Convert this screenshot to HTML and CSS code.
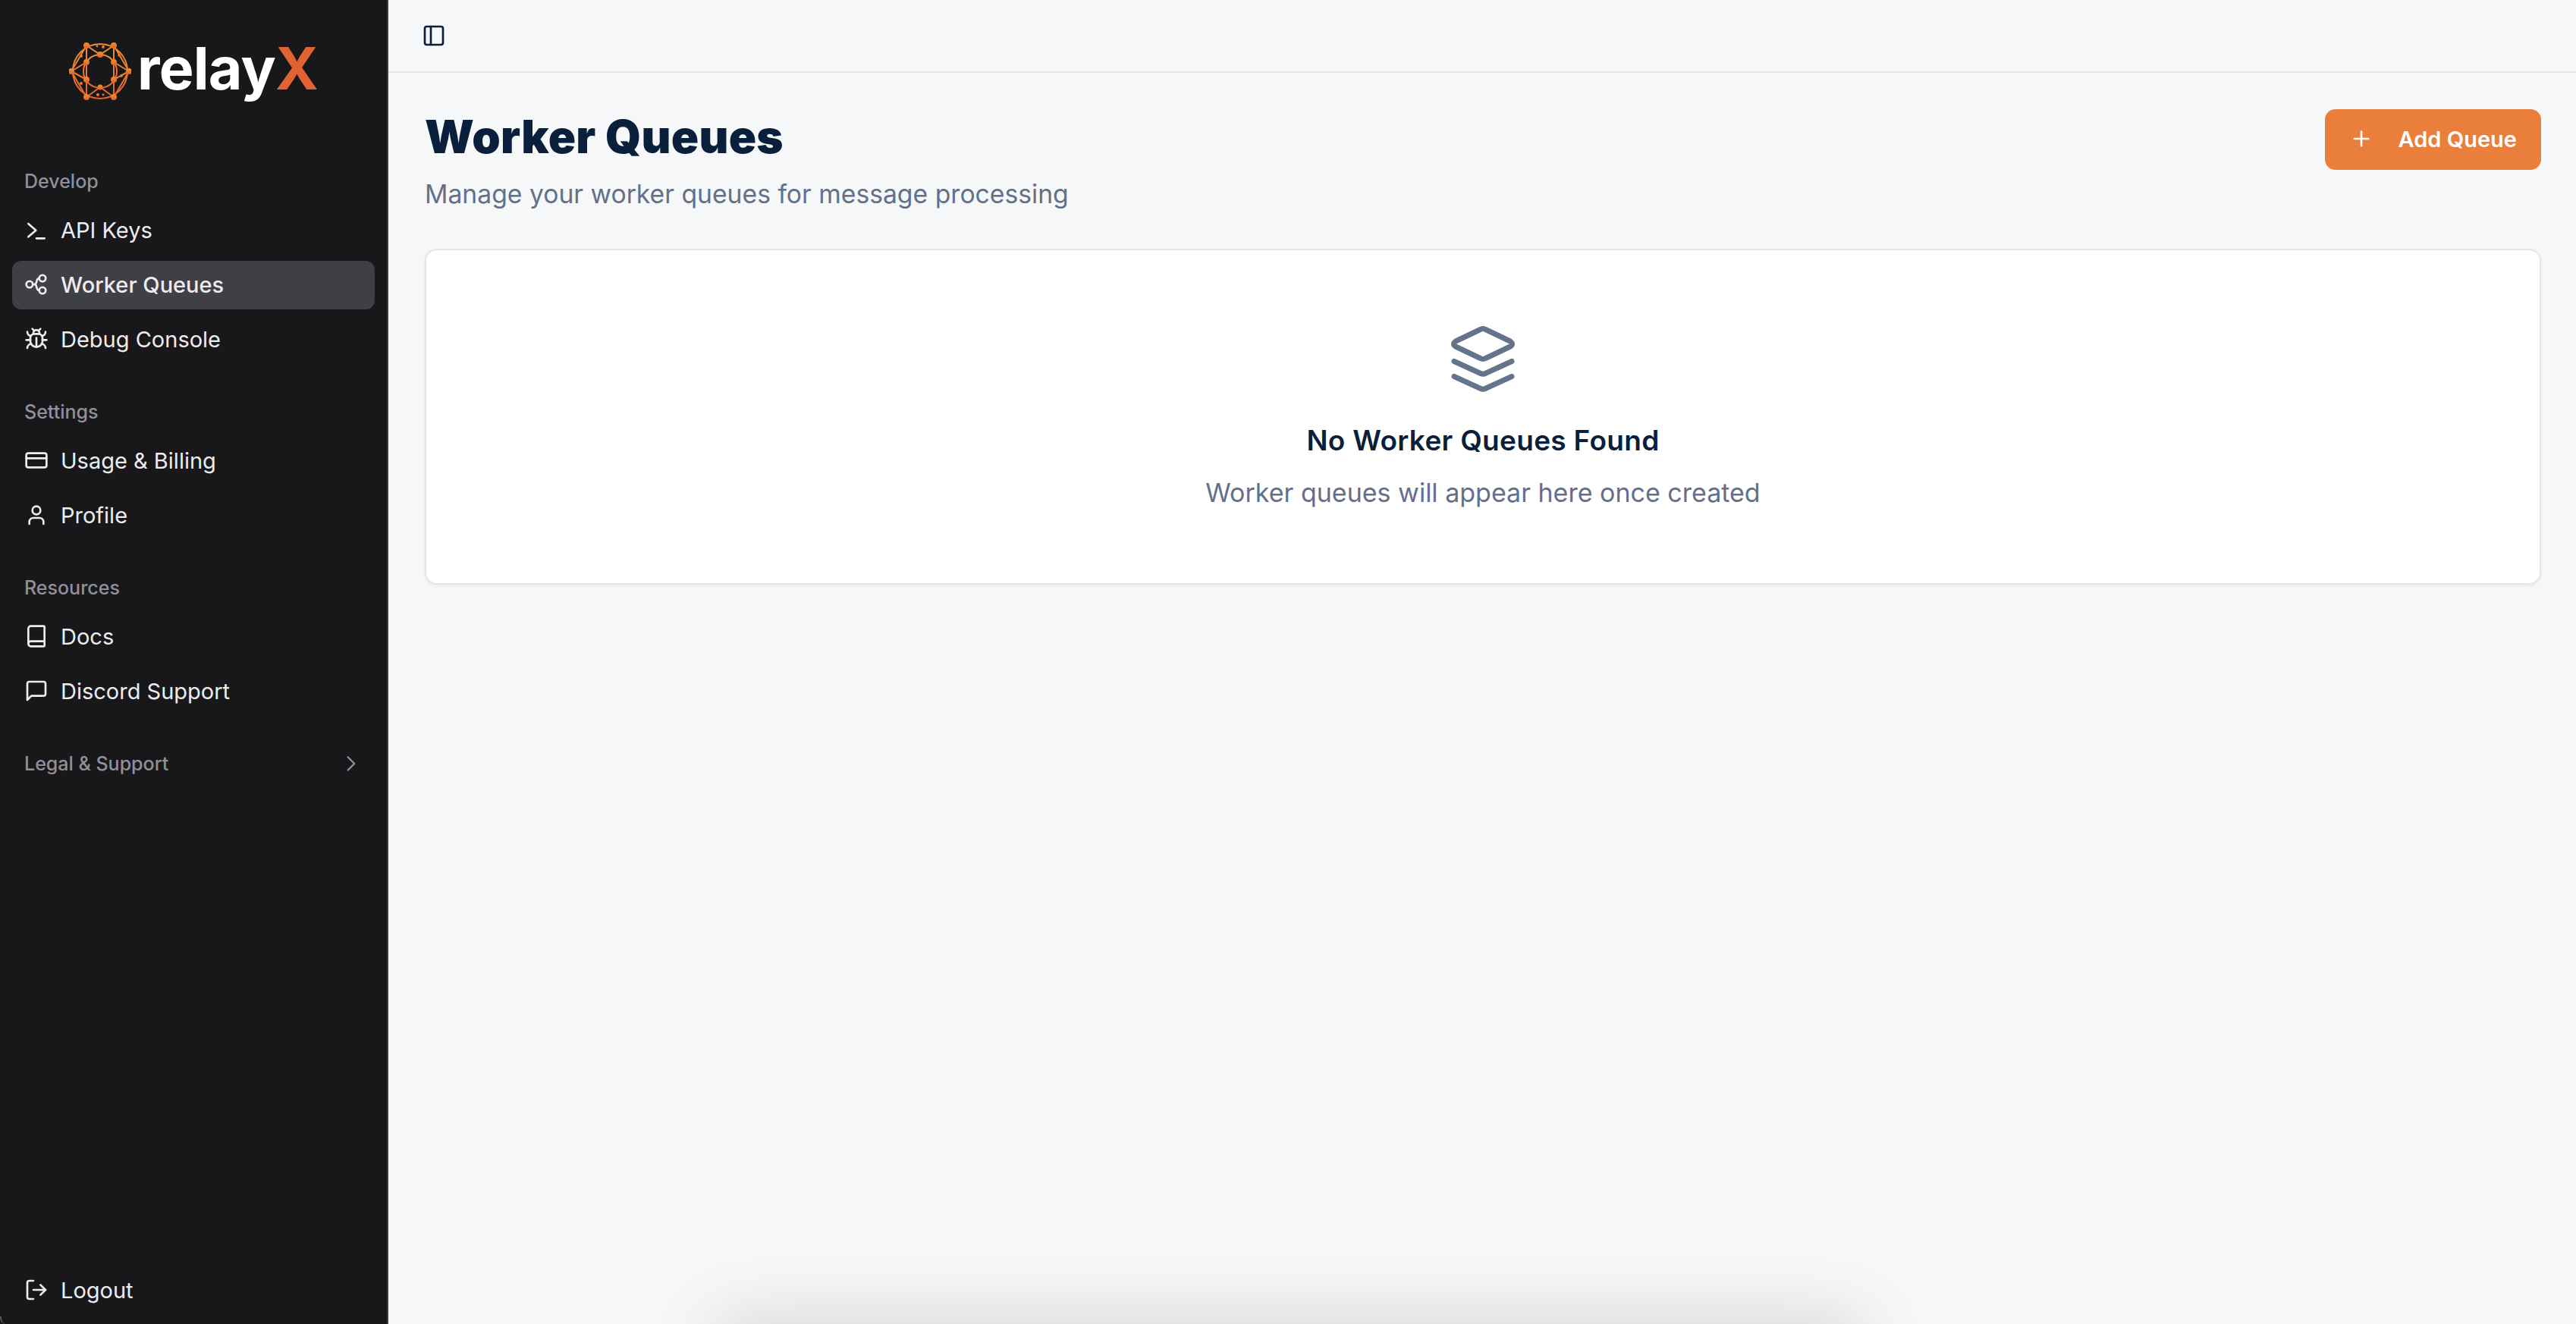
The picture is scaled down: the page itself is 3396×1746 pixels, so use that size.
FILE: index.html
```html
<!DOCTYPE html>
<html lang="en">
<head>
  <meta charset="UTF-8">
  <title>Worker Queues</title>
  <link rel="stylesheet" href="styles.css">
</head>
<body>
  <div class="app">
    <aside class="sidebar">
      <div class="logo">
        <svg class="logo-mark" viewBox="0 0 80 80" fill="none">
          <defs>
            <linearGradient id="ringGrad" x1="0" y1="0" x2="0" y2="1">
              <stop offset="0" stop-color="#ee9030"/>
              <stop offset="1" stop-color="#e2622f"/>
            </linearGradient>
          </defs>
          <g stroke="url(#ringGrad)" stroke-width="2" fill="none">
            <circle cx="40" cy="40" r="36"/>
            <circle cx="40" cy="40" r="22"/>
            <path d="M22 6 L22 74 M58 6 L58 74 M2 40 L22 6 M2 40 L22 74 M78 40 L58 6 M78 40 L58 74"/>
            <path d="M22 6 L40 18 L58 6 M22 74 L40 61 L58 74 M2 40 L22 28 M2 40 L22 51 M78 40 L58 28 M78 40 L58 51"/>
          </g>
          <g fill="url(#ringGrad)">
            <circle cx="22" cy="6" r="4"/><circle cx="58" cy="6" r="4"/>
            <circle cx="2" cy="40" r="4"/><circle cx="78" cy="40" r="4"/>
            <circle cx="22" cy="74" r="4"/><circle cx="58" cy="74" r="4"/>
            <circle cx="40" cy="18" r="4"/><circle cx="40" cy="61" r="3.5"/>
            <circle cx="22" cy="28" r="4"/><circle cx="58" cy="28" r="4"/>
            <circle cx="22" cy="51" r="4"/><circle cx="58" cy="51" r="4"/>
            <circle cx="36" cy="7" r="1.4"/><circle cx="44" cy="8" r="2"/>
            <circle cx="15" cy="20" r="2"/><circle cx="65" cy="19" r="1.8"/>
            <circle cx="15" cy="56" r="2"/><circle cx="68" cy="46" r="2"/>
            <circle cx="37" cy="71" r="2"/><circle cx="44" cy="71" r="1.4"/>
          </g>
        </svg>
        <span class="logo-text">relay<span class="logo-x">X</span></span>
      </div>

      <nav class="nav">
        <div class="nav-group">
          <div class="nav-label">Develop</div>
          <a class="nav-item">
            <svg class="icon" viewBox="0 0 24 24"><polyline points="4 19 11.5 12.5 4 6"/><line x1="12" y1="20.5" x2="20" y2="20.5"/></svg>
            API Keys
          </a>
          <a class="nav-item active">
            <svg class="icon" viewBox="0 0 24 24"><circle cx="5.2" cy="12" r="3.2"/><circle cx="18" cy="6" r="3.2"/><circle cx="18" cy="18" r="3.2"/><path d="M8.4 12H10c1.800 0 1.800-1.500 2.200-3 .4-1.800 1.300-3 2.600-3"/><path d="M10 12c1.800 0 1.800 1.500 2.200 3 .4 1.800 1.300 3 2.600 3"/></svg>
            Worker Queues
          </a>
          <a class="nav-item">
            <svg class="icon" viewBox="0 0 24 24"><path d="m8 2 1.880 1.880"/><path d="M14.120 3.880 16 2"/><path d="M9 7.130v-1a3 3 0 1 1 6 0v1"/><path d="M12 20c-3.300 0-6-2.700-6-6v-3a4 4 0 0 1 4-4h4a4 4 0 0 1 4 4v3c0 3.300-2.700 6-6 6"/><path d="M12 20v-9"/><path d="M6.530 9C4.600 8.800 3 7.100 3 5"/><path d="M6 13H2"/><path d="M3 21c0-2.100 1.700-3.900 3.800-4"/><path d="M20.970 5c0 2.100-1.600 3.800-3.500 4"/><path d="M22 13h-4"/><path d="M17.200 17c2.100.1 3.800 1.900 3.800 4"/></svg>
            Debug Console
          </a>
        </div>
        <div class="nav-group">
          <div class="nav-label">Settings</div>
          <a class="nav-item">
            <svg class="icon" viewBox="0 0 24 24"><rect x="2" y="5" width="20" height="14" rx="2"/><line x1="2" y1="10" x2="22" y2="10"/></svg>
            Usage &amp; Billing
          </a>
          <a class="nav-item">
            <svg class="icon" viewBox="0 0 24 24"><path d="M19 21v-2a4 4 0 0 0-4-4H9a4 4 0 0 0-4 4v2"/><circle cx="12" cy="7.500" r="4"/></svg>
            Profile
          </a>
        </div>
        <div class="nav-group">
          <div class="nav-label">Resources</div>
          <a class="nav-item">
            <svg class="icon" viewBox="0 0 24 24"><path d="M4 19.500v-15A2.500 2.500 0 0 1 6.500 2H19a1 1 0 0 1 1 1v18a1 1 0 0 1-1 1H6.500a1 1 0 0 1 0-5H20"/></svg>
            Docs
          </a>
          <a class="nav-item">
            <svg class="icon" viewBox="0 0 24 24"><path d="M21 15a2 2 0 0 1-2 2H7l-4 4V5a2 2 0 0 1 2-2h14a2 2 0 0 1 2 2z"/></svg>
            Discord Support
          </a>
        </div>
        <div class="nav-label nav-collapse">
          Legal &amp; Support
          <svg class="icon chevron" viewBox="0 0 24 24"><path d="m9 18 6-6-6-6"/></svg>
        </div>
      </nav>

      <a class="nav-item logout">
        <svg class="icon" viewBox="0 0 24 24"><path d="M9 21H5a2 2 0 0 1-2-2V5a2 2 0 0 1 2-2h4"/><polyline points="16 17 21 12 16 7"/><line x1="21" y1="12" x2="9" y2="12"/></svg>
        Logout
      </a>
    </aside>

    <main class="main">
      <header class="topbar">
        <svg class="icon panel-icon" viewBox="0 0 24 24"><rect x="3" y="3" width="18" height="18" rx="2"/><path d="M9 3v18"/></svg>
      </header>

      <div class="content">
        <div class="page-head">
          <div>
            <h1 class="page-title">Worker Queues</h1>
            <p class="page-sub">Manage your worker queues for message processing</p>
          </div>
          <button class="add-btn">
            <svg class="icon" viewBox="0 0 24 24"><path d="M5 12h14"/><path d="M12 5v14"/></svg>
            Add Queue
          </button>
        </div>

        <section class="card">
          <svg class="empty-icon" viewBox="0 0 88 88" fill="none">
            <path d="M40.500 4.500Q44 2.500 47.500 4.500L80 20Q85 23.500 80 27L47.500 42.500Q44 44.500 40.500 42.500L8 27Q3 23.500 8 20Z"/>
            <path d="M6 46.500L41 62.500Q44 64 47 62.500L82 46.500"/>
            <path d="M6 66.500L41 82.500Q44 84 47 82.500L82 66.500"/>
          </svg>
          <h2 class="empty-title">No Worker Queues Found</h2>
          <p class="empty-sub">Worker queues will appear here once created</p>
        </section>
      </div>
    </main>

    <div class="dock-shadow"></div>
    <div class="window-corner"></div>
  </div>
</body>
</html>
```

FILE: styles.css
```css
* {
  box-sizing: border-box;
}

html, body {
  height: 100%;
}

body {
  margin: 0;
  overflow: hidden;
  font-family: "Inter", "Liberation Sans", sans-serif;
  background: #f6f7f9;
}

.app {
  position: relative;
  display: flex;
  height: 100%;
  overflow: hidden;
}

/* sidebar */
.sidebar {
  width: 512px;
  flex-shrink: 0;
  display: flex;
  flex-direction: column;
  padding: 0 16px 12px;
  background: #18181b;
  border-right: 2px solid #3f3f46;
}

.logo {
  display: flex;
  align-items: center;
  justify-content: center;
  gap: 8px;
  height: 188px;
}

.logo-mark {
  width: 82px;
  height: 80px;
}

.logo-text {
  font-size: 77px;
  font-weight: 700;
  line-height: 1;
  letter-spacing: -0.8px;
  color: #fff;
  margin-bottom: 8px;
}

.logo-x {
  color: #e16232;
}

.nav {
  flex: 1;
  display: flex;
  flex-direction: column;
  gap: 40px;
  padding-top: 28px;
}

.nav-group {
  display: flex;
  flex-direction: column;
  gap: 8px;
}

.nav-label {
  display: flex;
  align-items: center;
  height: 48px;
  padding: 0 0 2px 16px;
  font-size: 25px;
  font-weight: 500;
  color: #90909c;
}

.nav-item {
  display: flex;
  align-items: center;
  gap: 16px;
  height: 64px;
  padding: 0 16px 2px;
  border-radius: 12px;
  font-size: 29px;
  color: #ececee;
}

.nav-item.active {
  background: #3f3f46;
  font-weight: 500;
}

.nav-collapse {
  justify-content: space-between;
  padding-right: 14px;
}

.icon {
  width: 32px;
  height: 32px;
  flex-shrink: 0;
  fill: none;
  stroke: currentColor;
  stroke-width: 2;
  stroke-linecap: round;
  stroke-linejoin: round;
}

.chevron {
  width: 34px;
  height: 34px;
  stroke-width: 1.700;
}

/* main area */
.main {
  flex: 1;
  min-width: 0;
  display: flex;
  flex-direction: column;
}

.topbar {
  display: flex;
  align-items: center;
  height: 96px;
  padding-left: 44px;
  border-bottom: 2px solid #e5e7e3;
}

.panel-icon {
  color: #0a1f3c;
}

.content {
  padding: 48px 46px 0 48px;
}

.page-head {
  display: flex;
  justify-content: space-between;
  align-items: flex-start;
  margin-bottom: 50px;
}

.page-title {
  margin: 0 0 18px;
  font-size: 60px;
  font-weight: 900;
  line-height: 72px;
  letter-spacing: 0.3px;
  color: #0a1f3c;
}

.page-sub {
  margin: 0;
  font-size: 33.700px;
  line-height: 44px;
  color: #64708a;
}

.add-btn {
  display: flex;
  align-items: center;
  gap: 33px;
  height: 80px;
  padding: 0 32px 2px;
  border: none;
  border-radius: 14px;
  background: #e97f3b;
  color: #fff;
  font-family: inherit;
  font-size: 29px;
  font-weight: 600;
}

.card {
  display: flex;
  flex-direction: column;
  align-items: center;
  height: 443px;
  padding-top: 100px;
  background: #fff;
  border: 2px solid #e4e5e5;
  border-radius: 16px;
  box-shadow: 0 2px 4px rgba(0, 0, 0, 0.05);
}

.empty-icon {
  width: 88px;
  height: 88px;
}

.empty-icon path {
  stroke: #64748b;
  stroke-width: 7;
  stroke-linecap: round;
  stroke-linejoin: round;
}

.empty-title {
  margin: 39px 0 23px;
  font-size: 37px;
  font-weight: 600;
  line-height: 48px;
  letter-spacing: 0.3px;
  color: #0a1f3c;
}

.empty-sub {
  margin: 0;
  font-size: 34px;
  line-height: 44px;
  color: #64708a;
}

/* shadow of the window underneath, cut off by the screen edge */
.dock-shadow {
  position: absolute;
  left: 945px;
  top: 100%;
  width: 1508px;
  height: 60px;
  box-shadow: 0 0 90px rgba(0, 0, 0, 0.18);
}

.window-corner {
  position: absolute;
  left: 0;
  bottom: 0;
  width: 8px;
  height: 10px;
  border-left: 2px solid #55555c;
  border-bottom-left-radius: 10px;
}
```
